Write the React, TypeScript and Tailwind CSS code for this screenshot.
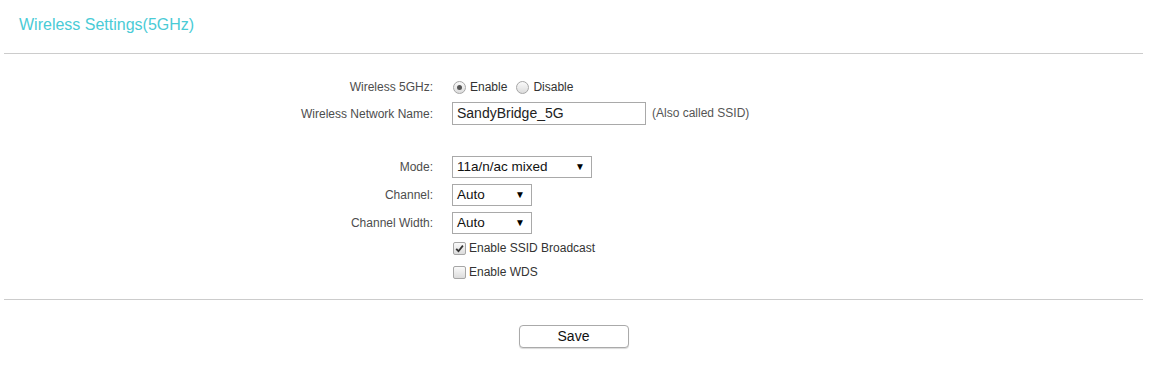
import React from 'react';

const labelCls = 'w-[429px] shrink-0 text-right text-[12px] text-[#4d4d4d]';

const Radio = ({ checked }: { checked?: boolean }) => (
  <span className="inline-flex h-[13px] w-[13px] items-center justify-center rounded-full border border-[#a6a6a6] bg-gradient-to-b from-[#fafafa] to-[#dcdcdc]">
    {checked && <span className="h-[5px] w-[5px] rounded-full bg-[#555]" />}
  </span>
);

const Checkbox = ({ checked }: { checked?: boolean }) => (
  <span className="inline-flex h-[13px] w-[13px] items-center justify-center rounded-[2px] border border-[#a6a6a6] bg-gradient-to-b from-[#fafafa] to-[#dcdcdc]">
    {checked && (
      <svg width="9" height="9" viewBox="0 0 9 9">
        <path d="M1.2 4.8 L3.5 7.2 L7.9 1.6" stroke="#333" strokeWidth="1.8" fill="none" />
      </svg>
    )}
  </span>
);

const Select = ({ value, width }: { value: string; width: string }) => (
  <div className={`flex h-[22px] items-center justify-between border border-[#a9a9a9] bg-white pl-[4px] pr-[6px] text-[13.5px] text-[#111] ${width}`}>
    <span>{value}</span>
    <span className="text-[10px] leading-none text-black">▼</span>
  </div>
);

export default function App() {
  return (
    <div className="h-[368px] w-[1168px] bg-white" style={{ fontFamily: '"Liberation Sans", Arial, sans-serif' }}>
      <div className="w-[1139px] ml-[4px]">
        <div className="h-[53px] pl-[15px] pt-[13px] text-[16px] text-[#4acbd6]">Wireless Settings(5GHz)</div>
        <div className="h-px bg-[#cccccc]" />

        <div className="pt-[20px]">
          <div className="flex h-[26px] items-center">
            <div className={labelCls}>Wireless 5GHz:</div>
            <div className="ml-[20px] flex items-center gap-[4px] text-[12px] text-[#333]">
              <Radio checked />
              <span>Enable</span>
              <span className="ml-[1px]" />
              <Radio />
              <span>Disable</span>
            </div>
          </div>
          <div className="flex h-[26px] items-center">
            <div className={`${labelCls} self-start pt-[5px]`}>Wireless Network Name:</div>
            <div className="ml-[19px] flex items-center">
              <div className="flex h-[23px] w-[194px] items-center border border-[#a9a9a9] pl-[4px] text-[14px] text-[#222]">
                SandyBridge_5G
              </div>
              <span className="ml-[6px] text-[12px] text-[#555]">(Also called SSID)</span>
            </div>
          </div>

          <div className="h-[29px]" />

          <div className="flex h-[24px] items-center">
            <div className={`${labelCls} self-start pt-[3px]`}>Mode:</div>
            <div className="ml-[19px]">
              <Select value="11a/n/ac mixed" width="w-[140px]" />
            </div>
          </div>
          <div className="mt-[4px] flex h-[24px] items-center">
            <div className={`${labelCls} self-start pt-[3px]`}>Channel:</div>
            <div className="ml-[19px]">
              <Select value="Auto" width="w-[80px]" />
            </div>
          </div>
          <div className="mt-[4px] flex h-[24px] items-center">
            <div className={`${labelCls} self-start pt-[3px]`}>Channel Width:</div>
            <div className="ml-[19px]">
              <Select value="Auto" width="w-[80px]" />
            </div>
          </div>
          <div className="flex h-[26px] items-center">
            <div className="w-[429px] shrink-0" />
            <div className="ml-[20px] flex items-center gap-[3px] text-[12px] text-[#333]">
              <Checkbox checked />
              <span>Enable SSID Broadcast</span>
            </div>
          </div>
          <div className="flex h-[22px] items-center">
            <div className="w-[429px] shrink-0" />
            <div className="ml-[20px] flex items-center gap-[3px] text-[12px] text-[#333]">
              <Checkbox />
              <span>Enable WDS</span>
            </div>
          </div>
        </div>

        <div className="mt-[16px] h-px bg-[#cccccc]" />

        <div className="flex justify-center pt-[25px]">
          <button className="h-[23px] w-[110px] rounded-[4px] border border-[#aaaaaa] bg-white text-[14px] text-[#111] shadow-[0_1px_1px_rgba(0,0,0,0.15)]">
            Save
          </button>
        </div>
      </div>
    </div>
  );
}
